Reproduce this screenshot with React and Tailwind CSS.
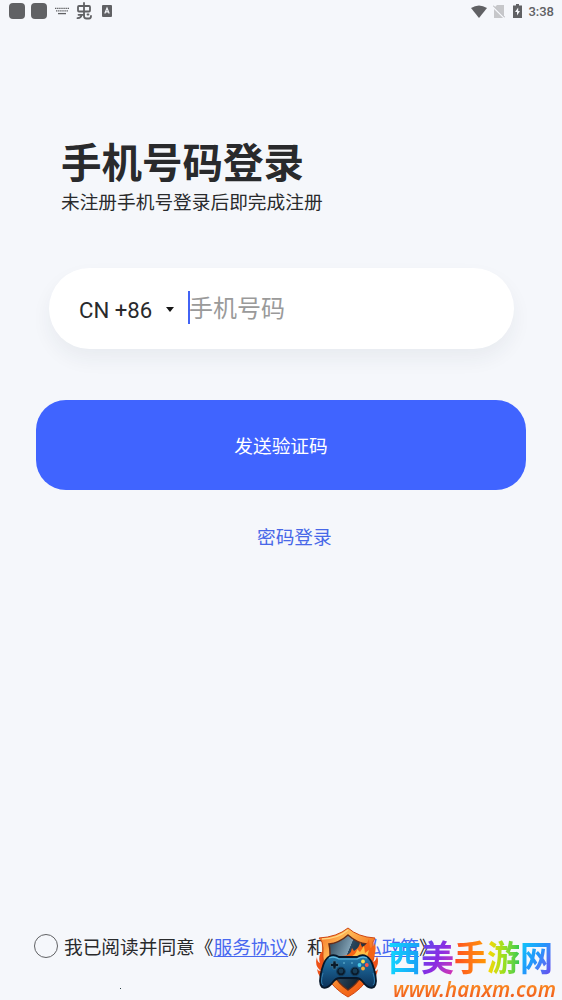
// Phone number login screen.

const WATERMARK = [
  { char: "西", style: "bg-linear-to-r from-[#12d8ff] to-[#1c9cf5]" },
  { char: "美", style: "bg-linear-to-br from-[#4a4df0] via-[#8a2be2] to-[#ee1fa0]" },
  { char: "手", style: "bg-linear-to-r from-[#ff4a1f] to-[#ff9800]" },
  { char: "游", style: "bg-linear-to-r from-[#ffd500] via-[#9be01c] to-[#22c94e]" },
  { char: "网", style: "bg-linear-to-br from-[#08d4f8] via-[#2492fb] to-[#6a1fe8]" },
];

const StatusBar = () => (
  <header className="flex h-6 items-center justify-between pl-[9px] pr-2 text-[#606164]">
    <div className="flex h-[22px] items-center self-start">
      <span className="h-4 w-4 rounded-[4px] bg-[#606164]" />
      <span className="ml-1.5 h-4 w-4 rounded-[4px] bg-[#606164]" />
      <svg className="ml-2 h-[9px] w-[14px]" viewBox="0 0 14 9" fill="none" stroke="currentColor" strokeWidth="1.3">
        <path d="M0 1.4h14" strokeDasharray="1.4 0.7" />
        <path d="M1 3.8h12" strokeDasharray="1.4 0.7" />
        <path d="M3 6.6h8" />
      </svg>
      <svg className="ml-[7px] h-[18px] w-4" viewBox="0 0 16 18" fill="none" stroke="currentColor" strokeWidth="1.8" strokeLinecap="round" strokeLinejoin="round">
        <path d="M3 4h10q1 0 1 1v3.500q0 1-1 1H3q-1 0-1-1V5q0-1 1-1Z" />
        <path d="M8 1v13q0 2.500 2.500 2.500H13q2 0 2-2.500" />
        <path d="M8 12.800H2.500M5.500 12.800Q5.500 16 1.500 16.200M11.500 12.500h1" />
      </svg>
      <svg className="ml-[10px] h-3 w-[10px]" viewBox="0 0 10 12">
        <rect width="10" height="12" rx="1" fill="currentColor" />
        <path d="M2.800 8.500 5 3l2.200 5.500M3.600 6.900h2.800" fill="none" stroke="#f5f7fb" strokeWidth="1.2" />
      </svg>
    </div>
    <div className="flex h-[22px] items-center self-start">
      <svg className="h-[13px] w-4" viewBox="0 0 16 13">
        <path d="M0 3Q8-2 16 3L8 13Z" fill="currentColor" />
      </svg>
      <svg className="ml-1.5 h-[13px] w-3" viewBox="0 0 12 13">
        <path d="M4 0h7v13H1V3Z" fill="#c6c7ca" />
        <path d="M0 1.500 11.500 13" stroke="#f5f7fb" strokeWidth="2" />
        <path d="M0 .5 12 12.500" stroke="#a9aaae" strokeWidth="1" />
      </svg>
      <svg className="ml-2 h-[14px] w-[9px]" viewBox="0 0 9 14">
        <path d="M3 0h3v1.500h3V14H0V1.500h3Z" fill="currentColor" />
        <path d="M5.200 3.500 2 8h2v3.500L7 7H5.200Z" fill="#f5f7fb" />
      </svg>
      <span className="ml-1.5 mt-px font-[Roboto] text-[13px] font-medium leading-none">3:38</span>
    </div>
  </header>
);

const GamepadShield = () => (
  <svg className="absolute left-[315px] top-[926px] h-[72px] w-[66px]" viewBox="0 0 66 72">
    <defs>
      <linearGradient id="flame" x1="0" y1="0" x2="1" y2="1">
        <stop offset="0" stopColor="#f5651c" />
        <stop offset=".3" stopColor="#ffb956" />
        <stop offset=".65" stopColor="#f5701c" />
        <stop offset="1" stopColor="#f04a12" />
      </linearGradient>
      <linearGradient id="steel" x1="0" y1="0" x2="1" y2=".6">
        <stop offset="0" stopColor="#263f52" />
        <stop offset=".5" stopColor="#7f9fb2" />
        <stop offset=".51" stopColor="#2b485e" />
        <stop offset="1" stopColor="#0d1b29" />
      </linearGradient>
      <linearGradient id="pad" x1="0" y1="0" x2="0" y2="1">
        <stop offset="0" stopColor="#287faf" />
        <stop offset=".45" stopColor="#185a8a" />
        <stop offset="1" stopColor="#0b3158" />
      </linearGradient>
    </defs>
    {/* flames licking past both edges of the shield */}
    <path d="M6 26Q3 32 5 37q-3-1-3-6-3 9 4 14-3 0-4-2 1 9 10 13h42q8-4 9-13-2 3-4 2 6-7 3-15-1 5-4 6 3-6 0-12Z" fill="#ee5218" />
    <path d="M33 2Q43 11 60 12q-3 3-2 10 1 17-4 29-7 12-21 20-14-8-21-20Q7 39 8 22q0-7-4-10 18-1 29-10Z" fill="url(#flame)" stroke="#cf4713" strokeWidth="1" />
    <path d="M33 4Q22 13 7 13" fill="none" stroke="#ffd681" strokeWidth="1.300" />
    <path d="M33 9q9 8 19 9-1 4-1 10 0 14-4 21-5 9-14 15-9-6-14-15-4-7-4-21 0-6-1-10 10-1 19-9Z" fill="url(#steel)" stroke="#672c18" strokeWidth="1.500" />
    <path d="M27 30q9 0 10-8l2 3q6-4 6-9l2 5q5-2 7-8l1 9q4-1 5-5 2 9-3 18H27Z" fill="#f46416" />
    <path d="M35 31q7-3 7-8l3 3 4-6 1 7 4-3-2 7Z" fill="#ffbe45" />
    {/* controller */}
    <path d="M15 30q4-2 9 1h18q5-3 9-1 5 2 8 13 4 14 0 18-5 3-11-5-3-4-7-4H25q-4 0-7 4-6 8-11 5-4-4 0-18 3-11 8-13Z" fill="url(#pad)" stroke="#071729" strokeWidth="1.800" />
    <path d="M14 32q5-2 10 1h18q5-3 10-1" fill="none" stroke="#61b8dc" strokeWidth="1.200" />
    <path d="M8 47q-3 10 0 12m50-12q3 10 0 12" fill="none" stroke="#327eae" strokeWidth="1" />
    <path d="M18 35h3v2.500h2.500v3H21V43h-3v-2.500h-2.500v-3H18Z" fill="#0a1a29" stroke="#437894" strokeWidth=".7" />
    {[26, 40].map((cx) => (
      <g key={cx}>
        <circle cx={cx} cy="45.500" r="4.300" fill="#0b1b2b" stroke="#123d5d" strokeWidth="1" />
        <circle cx={cx} cy="45" r="2.400" fill="#173d57" />
      </g>
    ))}
    <path d="M28 37h2m6 0h2" stroke="#6bbad5" />
    <circle cx="48" cy="35.500" r="1.900" fill="#ffe04b" />
    <circle cx="44.500" cy="39" r="1.900" fill="#49cce9" />
    <circle cx="51.800" cy="39" r="1.900" fill="#ff5747" />
    <circle cx="48" cy="42.500" r="1.900" fill="#f8ac35" />
  </svg>
);

const Watermark = () => (
  <div className="pointer-events-none">
    <GamepadShield />
    <div className="absolute left-[388px] top-[935px] flex scale-y-108 text-[33px] font-bold leading-[48px]">
      {WATERMARK.map(({ char, style }) => (
        <span key={char} className={`${style} bg-clip-text text-transparent`}>{char}</span>
      ))}
    </div>
    <div className="absolute left-[393px] top-[977px] origin-left scale-x-95 whitespace-nowrap bg-linear-to-b from-[#fa8a22] from-30% to-[#ee4c1c] bg-clip-text pr-1 font-['Noto_Sans'] text-[21.500px] font-semibold italic leading-6 tracking-[0.1px] text-transparent">
      www.hanxm.com
    </div>
  </div>
);

const App = () => (
  <div className="relative flex h-[1000px] w-[562px] flex-col overflow-hidden bg-[#f5f7fb] font-[Roboto,'Noto_Sans_CJK_SC',sans-serif] text-[#292a2c]">
    <StatusBar />

    <main className="flex-1">
      <div className="ml-[61px] mt-[116px]">
        <h1 className="text-[40.500px] font-bold leading-[48px]">手机号码登录</h1>
        <p className="mt-px text-[18.700px] leading-7">未注册手机号登录后即完成注册</p>
      </div>

      <div className="ml-[49px] mt-[51px] flex h-[81px] w-[465px] items-center rounded-full bg-white pl-[30px] shadow-[0_10px_20px_rgba(40,50,60,0.06)]">
        <span className="mt-[3px] w-[73px] whitespace-nowrap text-[22.200px] leading-8">CN +86</span>
        <svg className="ml-[14px] mt-0.5 h-[5px] w-2" viewBox="0 0 8 5">
          <path d="M0 0h8L4 5Z" fill="#151515" />
        </svg>
        <span className="-mt-[3px] ml-[14px] h-[33px] w-[2px] bg-[#4263f5]" />
        <span className="-ml-px mt-px text-[24px] leading-8 text-[#9a9a9a]">手机号码</span>
      </div>

      <button className="ml-9 mt-[51px] block h-[90px] w-[490px] rounded-[30px] bg-[#4064ff] pt-[5px] text-[18.700px] text-white">
        发送验证码
      </button>
      <button className="ml-[257px] mt-[34px] block text-[18.700px] leading-7 text-[#4868e8]">密码登录</button>
    </main>

    <footer className="flex h-[67px] items-start pl-[34px]">
      <span className="mt-px h-6 w-6 rounded-full border-[1.500px] border-[#606164]" />
      <div className="ml-1.5">
        <p className="mt-px whitespace-nowrap text-[18.700px] leading-7">
          我已阅读并同意《<a className="text-[#4868f0] underline underline-offset-2">服务协议</a>》和《<a className="text-[#4868f0] underline underline-offset-2">隐私政策</a>》
        </p>
        <span className="ml-14 mt-[26px] block h-px w-px bg-[#263d42]" />
      </div>
    </footer>

    <Watermark />
  </div>
);

export default App;
